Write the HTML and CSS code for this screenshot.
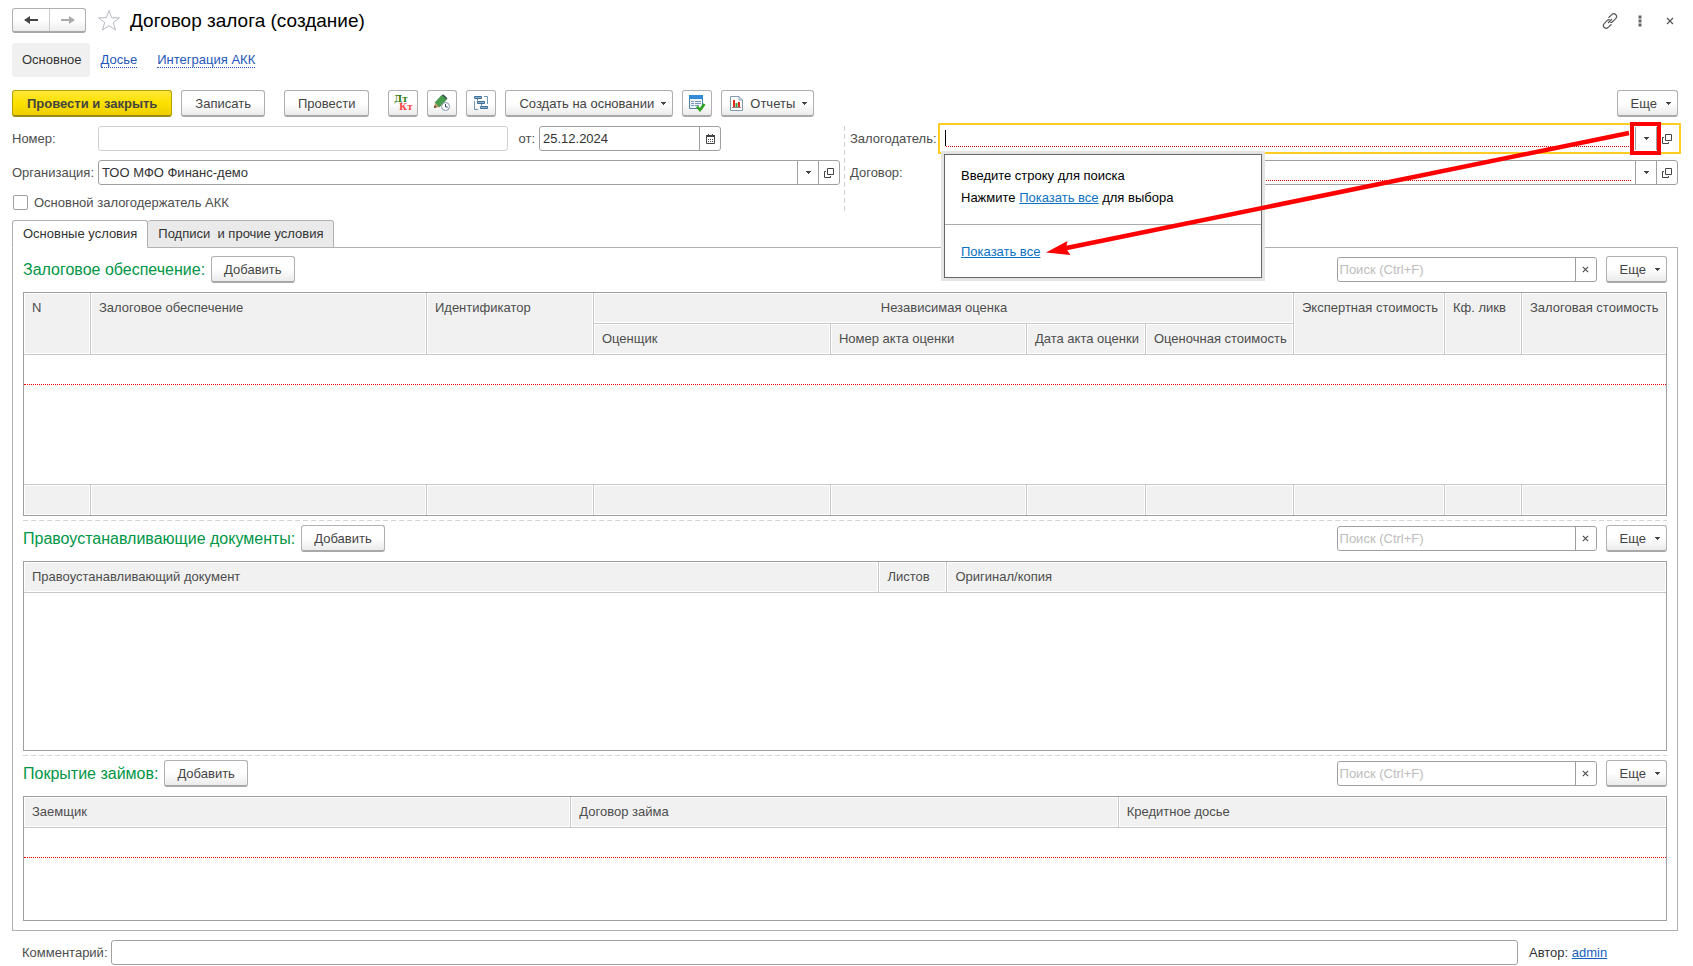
FILE: index.html
```html
<!DOCTYPE html>
<html lang="ru">
<head>
<meta charset="utf-8">
<title>Договор залога (создание)</title>
<link rel="stylesheet" href="styles.css">
</head>
<body>
<svg class="defs" aria-hidden="true">
  <symbol id="caret" viewBox="0 0 5 3"><path d="M0 0h5v1h-1v1h-1v1h-1v-1h-1v-1h-1z"/></symbol>
  <symbol id="open" viewBox="0 0 10 10"><path d="M3.500.5h6v6h-6zM2 3.500H.5v6h6V8" fill="none" stroke="currentColor"/></symbol>
  <symbol id="cross" viewBox="0 0 8 8"><path d="M1 1l6 6M7 1l-6 6" fill="none" stroke="currentColor" stroke-width="1.200"/></symbol>
</svg>

<header class="titlebar">
  <div class="history">
    <button type="button" aria-label="Назад"><svg width="14" height="10" viewBox="0 0 14 10"><path d="M14 4H6V1L0 5l6 4V6h8z" fill="#444"/></svg></button>
    <button type="button" aria-label="Вперед"><svg width="14" height="10" viewBox="0 0 14 10"><path d="M0 4h8V1l6 4-6 4V6H0z" fill="#aaa"/></svg></button>
  </div>
  <button type="button" class="plain star" aria-label="В избранное"><svg width="24" height="23" viewBox="0 0 24 23"><path d="M12 1.500l2.700 7.200 7.700.2-6.100 4.700 2.200 7.400-6.500-4.300-6.500 4.300 2.200-7.400-6.100-4.700 7.700-.2z" fill="#fff" stroke="#b4b8c0"/></svg></button>
  <h1>Договор залога (создание)</h1>
  <div class="window-tools">
    <button type="button" class="plain" aria-label="Ссылка"><svg width="16" height="16" viewBox="0 0 16 16"><g fill="none" stroke="#555" stroke-width="1.200"><path d="M6.500 4.800L9.800 1.700a2.600 2.600 0 0 1 4 3.700L10.500 8.800a2.400 2.400 0 0 1-2.200.6"/><path d="M9.500 11.200L6.200 14.300a2.600 2.600 0 0 1-4-3.700L5.500 7.200a2.400 2.400 0 0 1 2.200-.6M6 10l4-4"/></g></svg></button>
    <button type="button" class="plain" aria-label="Меню"><svg width="4" height="12" viewBox="0 0 4 12"><path d="M.5.5h3v3h-3zM.5 4.500h3v3h-3zM.5 8.500h3v3h-3z" fill="#666"/></svg></button>
    <button type="button" class="plain" aria-label="Закрыть"><svg width="8" height="8"><use href="#cross"/></svg></button>
  </div>
</header>

<nav class="sections">
  <span class="current">Основное</span>
  <a href="#dossier">Досье</a>
  <a href="#akk">Интеграция АКК</a>
</nav>

<div class="toolbar">
  <button type="button" class="btn primary">Провести и закрыть</button>
  <button type="button" class="btn">Записать</button>
  <button type="button" class="btn apart">Провести</button>
  <button type="button" class="btn icon apart dtkt" aria-label="Движения"><span class="dt">Дт</span><span class="kt">Кт</span></button>
  <button type="button" class="btn icon" aria-label="Запланировать"><svg width="18" height="18" viewBox="0 0 18 18"><path d="M1 14l1-5 4.500 4z" fill="#c89860"/><path d="M1 14l.6-2.600 2 1.700z" fill="#333"/><path d="M2.200 8.500L9 1.200l4.500 4L6.500 12.800z" fill="#48a04c" stroke="#2c7a35" stroke-width=".8"/><path d="M9 1.200l1.200-1 4.300 4-1 1z" fill="#30505a"/><circle cx="12.500" cy="12.500" r="4" fill="#fff" stroke="#7893a8"/><path d="M12.500 10v3h2.300" fill="none" stroke="#35516b"/></svg></button>
  <button type="button" class="btn icon" aria-label="Структура"><svg width="16" height="16" viewBox="0 0 16 16"><g fill="#8bb2d0" stroke="#3f6f94"><path d="M1.500 1.500h7v2h-7zM4.500 6.500h7v2h-7zM7.500 11.500h7v2h-7z"/></g><path d="M4.500 4v3M8.500 9v3M11 1.500h3.500V9M1.500 6v8.500H5" fill="none" stroke="#6e94b0"/></svg></button>
  <button type="button" class="btn menu">Создать на основании<svg class="caret"><use href="#caret"/></svg></button>
  <button type="button" class="btn icon" aria-label="Проверка"><svg width="18" height="17" viewBox="0 0 18 17"><path d="M1.500.5h13v13h-13z" fill="#eaf2fa" stroke="#547fa9"/><path d="M1 0h14v4H1z" fill="#318bd8"/><path d="M3 6.500h3M3 8.500h3M3 10.500h3M7 6.500h6M7 8.500h6M7 10.500h4" stroke="#7d98b5"/><path d="M9 11.500l3 3.500 4.500-6" fill="none" stroke="#2fa318" stroke-width="2.600"/></svg></button>
  <button type="button" class="btn menu"><svg class="report" width="13" height="15" viewBox="0 0 13 15"><path d="M.5.5h8.500l3.500 3.500v10.500H.5z" fill="#fff" stroke="#829aaa"/><path d="M9 .5V4h3.500" fill="none" stroke="#829aaa"/><path d="M3 4h2v7H3zM8 6h2v5H8z" fill="#e52a1d"/><path d="M5.500 7h2v4h-2z" fill="#35a043"/><path d="M2 11.500h9" stroke="#888"/></svg>Отчеты<svg class="caret"><use href="#caret"/></svg></button>
  <button type="button" class="btn menu more">Еще<svg class="caret"><use href="#caret"/></svg></button>
</div>

<form class="details">
  <div class="column">
    <div class="row number-row">
      <label class="caption" for="number">Номер:</label>
      <div class="field quiet"><input id="number" type="text"></div>
      <label class="from" for="date">от:</label>
      <div class="field date"><input id="date" type="text" value="25.12.2024"><button type="button" aria-label="Календарь"><svg width="9" height="10" viewBox="0 0 9 10"><path d="M.5 1.500h8v8h-8z" fill="none" stroke="#444"/><path d="M0 1h9v2H0zM2 0h1v1H2zM6 0h1v1H6zM2 5h1v1H2zM4 5h1v1H4zM6 5h1v1H6zM2 7h1v1H2zM4 7h1v1H4zM6 7h1v1H6z" fill="#444"/></svg></button></div>
    </div>
    <div class="row">
      <label class="caption" for="org">Организация:</label>
      <div class="field"><input id="org" type="text" value="ТОО МФО Финанс-демо"><button type="button" aria-label="Выбрать"><svg class="caret"><use href="#caret"/></svg></button><button type="button" aria-label="Открыть"><svg width="10" height="10"><use href="#open"/></svg></button></div>
    </div>
    <label class="check"><input type="checkbox">Основной залогодержатель АКК</label>
  </div>
  <div class="divider"></div>
  <div class="column right">
    <div class="row">
      <label class="caption" for="pledgor">Залогодатель:</label>
      <div class="field focused">
        <span class="cursor"></span><input id="pledgor" class="required" type="text"><button type="button" class="marked" aria-label="Выбрать"><svg class="caret"><use href="#caret"/></svg></button><button type="button" aria-label="Открыть"><svg width="10" height="10"><use href="#open"/></svg></button>
        <div class="popup">
          <div class="hint"><p>Введите строку для поиска</p><p>Нажмите <a href="#all">Показать все</a> для выбора</p></div>
          <div class="all"><a href="#all">Показать все</a></div>
        </div>
        <svg class="arrow" viewBox="1040 125 592 135" preserveAspectRatio="none"><path d="M1629 133L1064 248.500" stroke="red" stroke-width="4.500"/><path d="M1046 252.500l21.500-11.500-1.500 7.500 4.500 6.500z" fill="red"/></svg>
      </div>
    </div>
    <div class="row">
      <label class="caption" for="contract">Договор:</label>
      <div class="field"><input id="contract" class="required" type="text"><button type="button" aria-label="Выбрать"><svg class="caret"><use href="#caret"/></svg></button><button type="button" aria-label="Открыть"><svg width="10" height="10"><use href="#open"/></svg></button></div>
    </div>
  </div>
</form>

<div class="tabs" role="tablist">
  <button type="button" role="tab" aria-selected="true">Основные условия</button>
  <button type="button" role="tab" aria-selected="false">Подписи&nbsp; и прочие условия</button>
</div>

<main class="panel">
  <section>
    <div class="section-head">
      <h2>Залоговое обеспечение:</h2>
      <button type="button" class="btn">Добавить</button>
      <div class="field search"><input type="text" placeholder="Поиск (Ctrl+F)" aria-label="Поиск"><button type="button" aria-label="Очистить"><svg width="7" height="7"><use href="#cross"/></svg></button></div>
      <button type="button" class="btn menu more">Еще<svg class="caret"><use href="#caret"/></svg></button>
    </div>
    <table class="grid">
      <colgroup><col class="w-67"><col><col class="w-167"><col class="w-237"><col class="w-196"><col class="w-119"><col class="w-148"><col class="w-151"><col class="w-77"><col class="w-144"></colgroup>
      <thead>
        <tr><th rowspan="2">N</th><th rowspan="2">Залоговое обеспечение</th><th rowspan="2">Идентификатор</th><th colspan="4" class="group">Независимая оценка</th><th rowspan="2">Экспертная стоимость</th><th rowspan="2">Кф. ликв</th><th rowspan="2">Залоговая стоимость</th></tr>
        <tr><th>Оценщик</th><th>Номер акта оценки</th><th>Дата акта оценки</th><th>Оценочная стоимость</th></tr>
      </thead>
      <tbody><tr class="blank"><td colspan="10"></td></tr><tr class="space-collateral"><td colspan="10"></td></tr></tbody>
      <tfoot><tr><td></td><td></td><td></td><td></td><td></td><td></td><td></td><td></td><td></td><td></td></tr></tfoot>
    </table>
  </section>
  <section>
    <div class="section-head">
      <h2>Правоустанавливающие документы:</h2>
      <button type="button" class="btn">Добавить</button>
      <div class="field search"><input type="text" placeholder="Поиск (Ctrl+F)" aria-label="Поиск"><button type="button" aria-label="Очистить"><svg width="7" height="7"><use href="#cross"/></svg></button></div>
      <button type="button" class="btn menu more">Еще<svg class="caret"><use href="#caret"/></svg></button>
    </div>
    <table class="grid">
      <colgroup><col class="w-document"><col class="w-68"><col></colgroup>
      <thead><tr><th>Правоустанавливающий документ</th><th>Листов</th><th>Оригинал/копия</th></tr></thead>
      <tbody><tr class="space-documents"><td colspan="3"></td></tr></tbody>
    </table>
  </section>
  <section>
    <div class="section-head">
      <h2>Покрытие займов:</h2>
      <button type="button" class="btn">Добавить</button>
      <div class="field search"><input type="text" placeholder="Поиск (Ctrl+F)" aria-label="Поиск"><button type="button" aria-label="Очистить"><svg width="7" height="7"><use href="#cross"/></svg></button></div>
      <button type="button" class="btn menu more">Еще<svg class="caret"><use href="#caret"/></svg></button>
    </div>
    <table class="grid">
      <thead><tr><th>Заемщик</th><th>Договор займа</th><th>Кредитное досье</th></tr></thead>
      <tbody><tr class="blank"><td colspan="3"></td></tr><tr class="space-loans"><td colspan="3"></td></tr></tbody>
    </table>
  </section>
</main>

<footer class="row bottom">
  <label for="comment">Комментарий:</label>
  <div class="field"><input id="comment" type="text"></div>
  <p class="author">Автор: <a href="#admin">admin</a></p>
</footer>
</body>
</html>
```

FILE: styles.css
```css
* { box-sizing: border-box; }

body {
  margin: 0;
  padding: 8px 15px 0 12px;
  background: #fff;
  color: #4d4d4d;
  font: 13px/16px "Liberation Sans", Arial, sans-serif;
}

button, input { font: inherit; color: inherit; margin: 0; }
h1, h2, p { margin: 0; font-weight: normal; }
svg { display: block; flex: none; }
.defs { position: absolute; width: 0; height: 0; }
.caret { width: 5px; height: 3px; fill: #444; }

/* Title bar */
.titlebar { display: flex; align-items: center; height: 25px; }
.history {
  display: flex;
  height: 25px;
  border: 1px solid #b0b0b0;
  border-bottom: 2px solid #a8a8a8;
  border-radius: 3px;
  background: linear-gradient(#fff 50%, #ececec);
}
.history button {
  display: flex;
  align-items: center;
  justify-content: center;
  width: 36px;
  padding: 0;
  border: 0;
  background: none;
}
.history button + button { border-left: 1px solid #ccc; }
.plain { display: flex; justify-content: center; padding: 0; border: 0; background: none; color: #555; }
.star { margin: 0 9px 0 11px; }
h1 { color: #000; font-size: 19px; line-height: 25px; }
.window-tools { display: flex; align-items: center; gap: 14px; margin-left: auto; }
.window-tools .plain { width: 16px; }

/* Section links */
.sections { display: flex; align-items: center; gap: 20px; margin-top: 10px; height: 34px; }
.current { padding: 9px 8px 9px 10px; margin-right: -9px; border-radius: 3px; background: #f0f0f0; color: #333; }
.sections a { color: #2456b8; text-decoration: none; border-bottom: 1px dotted #2456b8; line-height: 14px; }

/* Buttons */
.btn {
  display: flex;
  align-items: center;
  justify-content: center;
  height: 27px;
  padding: 1px 13px 0;
  border: 1px solid #b0b0b0;
  border-bottom: 2px solid #a8a8a8;
  border-radius: 3px;
  background: linear-gradient(#fff 50%, #ebebeb);
  color: #444;
  font-size: 13px;
  white-space: nowrap;
}
.btn.menu { padding: 1px 6px 0 13px; gap: 7px; }
.btn.more { gap: 9px; }
.btn.icon { width: 30px; padding: 0; }
.btn.primary {
  padding: 1px 14px 0;
  border-color: #b8a200 #b8a200 #9b8a10;
  background: linear-gradient(#ffe838, #fde000 50%, #edce00);
  font-weight: bold;
}
.toolbar { display: flex; gap: 9px; margin-top: 13px; }
.toolbar .apart { margin-left: 10px; }
.toolbar .more { margin-left: auto; }
.report { margin-left: -5px; }
.btn.dtkt { flex-direction: column; font: bold 9px/8px "DejaVu Serif", serif; }
.dt { color: #2a7a10; margin-right: 5px; }
.kt { color: #f44; margin-left: 5px; }

/* Fields */
.row { display: flex; align-items: center; height: 25px; }
.field {
  display: flex;
  flex: 1;
  min-width: 0;
  height: 25px;
  border: 1px solid #a0a0a0;
  border-radius: 3px;
  background: #fff;
}
.field.quiet { border-color: #d0d0d0; }
.field input {
  flex: 1;
  min-width: 0;
  padding: 0 3px;
  border: 0;
  outline: 0;
  background: none;
  color: #333;
}
.field input::placeholder { color: #bdbdbd; opacity: 1; }
.field button {
  display: flex;
  align-items: center;
  justify-content: center;
  width: 21px;
  padding: 0;
  border: 0;
  border-left: 1px solid #a0a0a0;
  background: none;
  color: #444;
}
.field input.required { margin: 0 4px 3px 3px; padding: 0; border-bottom: 1px dotted #d00; }

/* Document details */
.details { display: grid; grid-template-columns: 1fr 10px 1fr; margin-top: 9px; }
.column { display: flex; flex-direction: column; gap: 9px; }
.caption { width: 86px; }
.right .caption { width: 91px; }
.number-row { padding-right: 119px; }
.from { padding: 0 4px 0 10px; }
.field.date { flex: 0 0 182px; }
.check { display: flex; align-items: center; gap: 6px; height: 17px; }
.check input {
  appearance: none;
  width: 15px;
  height: 15px;
  margin-left: 1px;
  border: 1px solid #a0a0a0;
  border-radius: 2px;
}
.divider {
  width: 1px;
  margin-left: 4px;
  background: repeating-linear-gradient(#d0d0d0 0 5px, transparent 5px 8px);
}
.field.focused {
  position: relative;
  border-color: transparent;
  border-radius: 0;
  outline: 2px solid #fc2;
  outline-offset: 1px;
}
.field.focused input.required { margin-left: 0; }
.cursor { width: 1px; height: 16px; margin: 3px 0 0 3px; background: #000; }
.field .marked { position: relative; z-index: 2; outline: 4px solid red; outline-offset: 1px; background: #fff; }

/* Suggestion list and callout drawn over the form */
.popup {
  position: absolute;
  z-index: 1;
  top: 27px;
  left: 2px;
  width: 318px;
  border: 1px solid #666;
  box-shadow: 0 0 0 3px #e4e4e4;
  background: #fff;
  color: #000;
}
.hint { padding: 10px 16px 15px; border-bottom: 1px solid #aaa; line-height: 22px; }
.all { padding: 16px 16px 14px; line-height: 22px; }
.popup a { color: #0b72c4; }
.arrow { position: absolute; z-index: 2; top: -2px; left: 98px; width: calc(100% - 143px); height: 135px; pointer-events: none; }

/* Tabs */
.tabs { display: flex; margin-top: 9px; height: 28px; position: relative; }
.tabs button {
  padding: 0 10px;
  border: 1px solid #b0b0b0;
  border-radius: 3px 3px 0 0;
  background: #eaeaea;
  color: #333;
}
.tabs button + button { border-left: 0; }
.tabs [aria-selected="true"] { border-bottom-color: #fff; background: #fff; }
.panel { margin-top: -1px; padding: 8px 10px 9px; border: 1px solid #b0b0b0; }

/* Sections and grids */
section + section {
  margin-top: 4px;
  padding-top: 5px;
  background: repeating-linear-gradient(90deg, #d4d4d4 0 5px, transparent 5px 8px) top / 100% 1px no-repeat;
}
.section-head { display: flex; align-items: center; height: 27px; margin-bottom: 9px; }
.section-head .btn { padding-left: 12px; padding-right: 12px; }
.section-head .more { padding-left: 13px; padding-right: 6px; }
h2 { margin-right: 6px; color: #009646; font-size: 16px; line-height: 20px; }
.search { flex: 0 0 260px; margin: 0 9px 0 auto; }
.search input { padding: 0 2px; }

.grid { width: 100%; table-layout: fixed; border: 1px solid #a0a0a0; border-spacing: 0; }
.grid th, .grid td { padding: 0; }
.grid th {
  height: 31px;
  padding: 0 7px 0 8px;
  border: solid #c8c8c8;
  border-width: 0 1px 1px 0;
  background: #f1f1f1;
  box-shadow: inset 0 0 0 1px #fff;
  font-weight: normal;
  line-height: 30px;
  text-align: left;
  vertical-align: top;
  white-space: nowrap;
}
.grid tr:first-child th:last-child, .grid tfoot td:last-child { border-right: 0; }
.grid th.group { text-align: center; }
.blank td { height: 30px; border-bottom: 1px dotted red; }
.grid tfoot td {
  height: 31px;
  border: solid #c8c8c8;
  border-width: 1px 1px 0 0;
  background: #f1f1f1;
  box-shadow: inset 0 0 0 1px #fff;
}
.space-collateral td { height: 99px; }
.space-documents td { height: 157px; }
.space-loans td { height: 62px; }
.w-67 { width: 67px; }
.w-68 { width: 68px; }
.w-77 { width: 77px; }
.w-119 { width: 119px; }
.w-144 { width: 144px; }
.w-148 { width: 148px; }
.w-151 { width: 151px; }
.w-167 { width: 167px; }
.w-196 { width: 196px; }
.w-237 { width: 237px; }
.w-document { width: 52.1%; }

/* Footer */
.bottom { margin-top: 9px; padding-left: 10px; }
.bottom label { margin-right: 3px; }
.author { width: 160px; padding-left: 11px; color: #333; }
.author a { color: #1560bd; }
```
